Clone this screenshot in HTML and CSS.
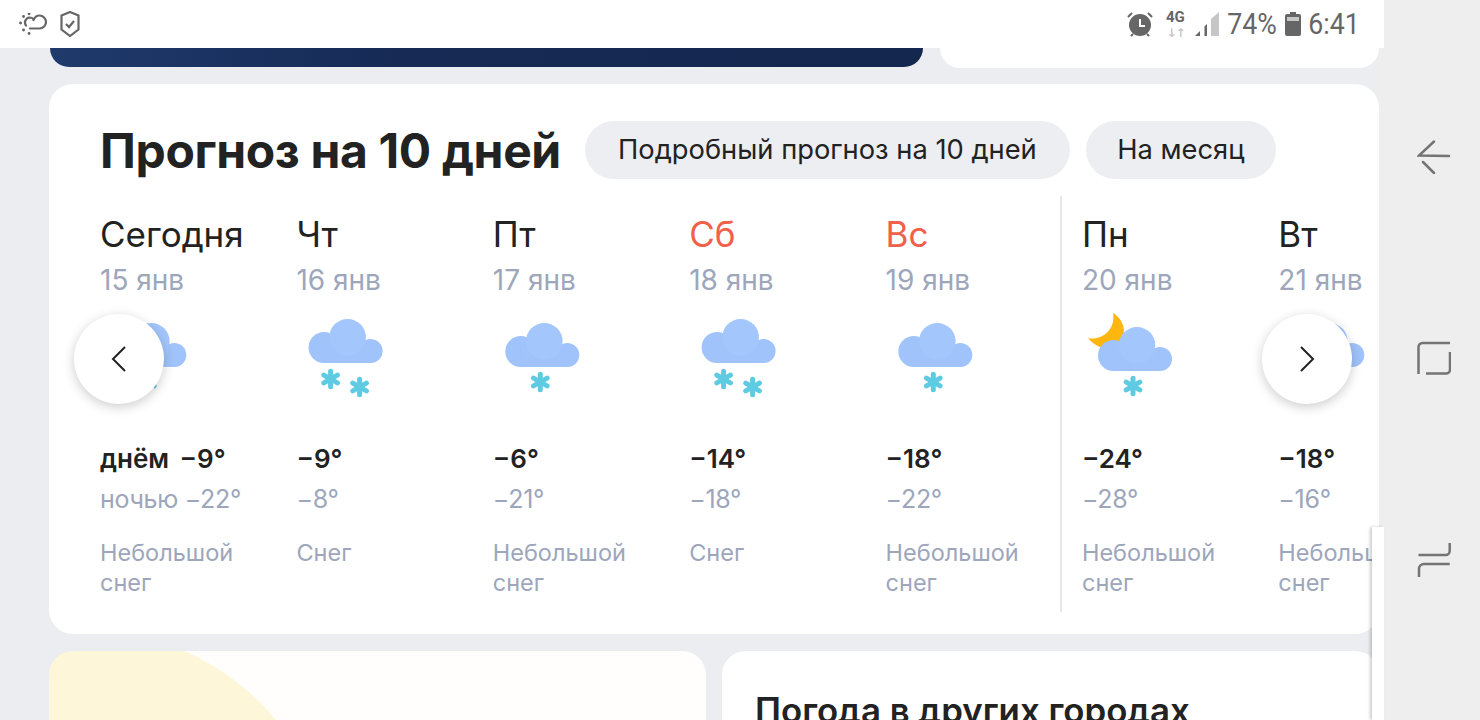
FILE: index.html
```html
<!DOCTYPE html>
<html lang="ru">
<head>
    <meta charset="UTF-8">
    <title>Прогноз на 10 дней</title>
    <link rel="stylesheet" href="styles.css">
</head>
<body>
    <svg class="defs" width="0" height="0">
        <defs>
            <g id="cloud">
                <circle cx="15.5" cy="28.5" r="15.5" fill="#9fc3fa"/>
                <circle cx="62" cy="32" r="12" fill="#9fc3fa"/>
                <rect x="15" y="22" width="47" height="22" fill="#9fc3fa"/>
                <circle cx="39" cy="18.3" r="18.3" fill="#a3c6fc"/>
            </g>
            <g id="flake" stroke="#5fcbe3" stroke-width="5" stroke-linecap="round">
                <line x1="0" y1="-7.8" x2="0" y2="7.8"/>
                <line x1="-6.8" y1="-3.9" x2="6.8" y2="3.9"/>
                <line x1="-6.8" y1="3.9" x2="6.8" y2="-3.9"/>
            </g>
            <g id="snow-light">
                <use href="#cloud" x="12.3" y="8"/>
                <use href="#flake" x="47.3" y="67"/>
            </g>
            <g id="snow-heavy">
                <use href="#cloud" x="12.6" y="4"/>
                <use href="#flake" x="34.6" y="64"/>
                <use href="#flake" x="63.6" y="72"/>
            </g>
        </defs>
    </svg>

    <div class="app">
        <div class="screen">
            <div class="status">
                <div class="status-left">
                    <svg width="28" height="22" viewBox="0 0 28 22" fill="none" stroke="#666" stroke-width="2.200" stroke-linecap="round">
                        <path d="M11 15.500h9.500a6.500 6.500 0 0 0 0-13c-3 0-5 2-6 4.500"/>
                        <path d="M7 12.500a5 5 0 0 1 3.500-8c1.500 0 3 .5 4 1.500"/>
                        <path d="M1.500 10h.1M4.500 3.500h.1M10 .8h.1M4.500 17h.1M10 20.500h.1" stroke-width="2.800"/>
                    </svg>
                    <svg width="20" height="26" viewBox="0 0 20 26" fill="none" stroke="#666" stroke-width="2.200">
                        <path d="M10 1l8.500 3.500v14L10 25l-8.500-6.500v-14z"/>
                        <path d="M6 13l3 3 5-6"/>
                    </svg>
                </div>
                <div class="status-right">
                    <svg class="alarm" width="26" height="25" viewBox="0 0 26 25">
                        <circle cx="13" cy="13" r="11" fill="#666"/>
                        <path d="M13 7v7h5" fill="none" stroke="#fff" stroke-width="2"/>
                        <path d="M1 5l4-4M25 5l-4-4M4 24l2-2M22 24l-2-2" stroke="#666" stroke-width="2"/>
                    </svg>
                    <div class="net">
                        <span class="net-label">4G</span>
                        <span class="net-arrows">↓↑</span>
                    </div>
                    <svg class="signal" width="24" height="24" viewBox="0 0 24 24">
                        <path d="M24 0v24H16V7z" fill="#c6c6c6"/>
                        <path d="M12 12v12H9.500V14.500z" fill="#666"/>
                        <path d="M5 19v5H0z" fill="#666"/>
                    </svg>
                    <span class="status-text">74%</span>
                    <svg class="battery" width="16" height="24" viewBox="0 0 16 24">
                        <path d="M5 0h6v2h3a2 2 0 0 1 2 2v18a2 2 0 0 1-2 2H2a2 2 0 0 1-2-2V4a2 2 0 0 1 2-2h3z" fill="#666"/>
                        <rect x="2" y="5" width="12" height="4" fill="#c6c6c6"/>
                    </svg>
                    <span class="status-text time">6:41</span>
                </div>
            </div>

            <div class="top-row">
                <div class="promo"></div>
                <div class="top-card"></div>
            </div>

            <section class="forecast">
                <div class="forecast-head">
                    <h1>Прогноз на 10 дней</h1>
                    <a class="pill pill-wide">Подробный прогноз на 10 дней</a>
                    <a class="pill">На месяц</a>
                </div>

                <div class="days">
                    <div class="day">
                        <div class="day-name">Сегодня</div>
                        <div class="day-date">15 янв</div>
                        <svg class="day-icon" viewBox="0 -5 100 95"><use href="#snow-light"/></svg>
                        <div class="temp-day"><span class="temp-label">днём</span> −9°</div>
                        <div class="temp-night">ночью −22°</div>
                        <div class="day-desc">Небольшой снег</div>
                    </div>
                    <div class="day">
                        <div class="day-name">Чт</div>
                        <div class="day-date">16 янв</div>
                        <svg class="day-icon" viewBox="0 -5 100 95"><use href="#snow-heavy"/></svg>
                        <div class="temp-day">−9°</div>
                        <div class="temp-night">−8°</div>
                        <div class="day-desc">Снег</div>
                    </div>
                    <div class="day">
                        <div class="day-name">Пт</div>
                        <div class="day-date">17 янв</div>
                        <svg class="day-icon" viewBox="0 -5 100 95"><use href="#snow-light"/></svg>
                        <div class="temp-day">−6°</div>
                        <div class="temp-night">−21°</div>
                        <div class="day-desc">Небольшой снег</div>
                    </div>
                    <div class="day weekend">
                        <div class="day-name">Сб</div>
                        <div class="day-date">18 янв</div>
                        <svg class="day-icon" viewBox="0 -5 100 95"><use href="#snow-heavy"/></svg>
                        <div class="temp-day">−14°</div>
                        <div class="temp-night">−18°</div>
                        <div class="day-desc">Снег</div>
                    </div>
                    <div class="day weekend">
                        <div class="day-name">Вс</div>
                        <div class="day-date">19 янв</div>
                        <svg class="day-icon" viewBox="0 -5 100 95"><use href="#snow-light"/></svg>
                        <div class="temp-day">−18°</div>
                        <div class="temp-night">−22°</div>
                        <div class="day-desc">Небольшой снег</div>
                    </div>
                    <div class="day week-start">
                        <div class="day-name">Пн</div>
                        <div class="day-date">20 янв</div>
                        <svg class="day-icon" viewBox="0 -5 100 95">
                            <path d="M31 -2C44 6 46 22 34 31C26 36 14 33 6 23C18 26 34 16 31 -2z" fill="#ffb70f"/>
                            <use href="#cloud" x="16" y="12"/>
                            <use href="#flake" x="51" y="71"/>
                        </svg>
                        <div class="temp-day">−24°</div>
                        <div class="temp-night">−28°</div>
                        <div class="day-desc">Небольшой снег</div>
                    </div>
                    <div class="day">
                        <div class="day-name">Вт</div>
                        <div class="day-date">21 янв</div>
                        <svg class="day-icon" viewBox="0 -5 100 95"><use href="#snow-light"/></svg>
                        <div class="temp-day">−18°</div>
                        <div class="temp-night">−16°</div>
                        <div class="day-desc">Небольшой снег</div>
                    </div>
                </div>

                <button class="arrow arrow-prev">
                    <svg width="16" height="26" viewBox="0 0 16 26" fill="none" stroke="#222" stroke-width="2"><path d="M14 1L2 13l12 12"/></svg>
                </button>
                <button class="arrow arrow-next">
                    <svg width="16" height="26" viewBox="0 0 16 26" fill="none" stroke="#222" stroke-width="2"><path d="M2 1l12 12L2 25"/></svg>
                </button>
            </section>

            <div class="bottom-row">
                <div class="bottom-card sunny"></div>
                <div class="bottom-card">
                    <h2>Погода в других городах</h2>
                </div>
            </div>

            <div class="scroll-strip"></div>
        </div>

        <nav class="softkeys">
            <svg width="34" height="34" viewBox="0 0 34 34" fill="none" stroke="#747474" stroke-width="2.500" stroke-linecap="round">
                <path d="M17 1.500L2 15.500l30 .5M6 22l11 11"/>
            </svg>
            <svg width="34" height="34" viewBox="0 0 34 34" fill="none" stroke="#747474" stroke-width="2.500">
                <path d="M1.500 33V6a4 4 0 0 1 4-4h27.500"/>
                <path d="M9 32.500h20a4 4 0 0 0 4-4V11"/>
            </svg>
            <svg width="34" height="36" viewBox="0 0 34 36" fill="none" stroke="#747474" stroke-width="2.500">
                <path d="M32.700 1v8a4 4 0 0 1-4 4H1.500"/>
                <path d="M32.700 22H7a5 5 0 0 0-5 5v8"/>
            </svg>
        </nav>
    </div>
</body>
</html>
```

FILE: styles.css
```css
html, body {
    margin: 0;
    height: 720px;
    overflow: hidden;
}
body {
    font-family: "Inter", "Noto Sans", sans-serif;
    color: #222;
    background: #eeeeef;
}
.defs {
    position: absolute;
}
.app {
    display: flex;
    width: 1480px;
    height: 720px;
}
.screen {
    position: relative;
    width: 1379px;
    height: 720px;
    flex-shrink: 0;
    background: #ecedf1;
    overflow: visible;
}

/* status bar */
.status {
    position: relative;
    z-index: 3;
    display: flex;
    justify-content: space-between;
    align-items: center;
    width: 1384px;
    height: 48px;
    box-sizing: border-box;
    padding: 0 24px 0 19px;
    background: #fff;
}
.status-left {
    display: flex;
    align-items: center;
    gap: 13px;
}
.status-right {
    display: flex;
    align-items: center;
}
.net {
    display: flex;
    flex-direction: column;
    align-items: center;
    width: 20px;
    margin-left: 12px;
    line-height: 12px;
}
.net-label {
    font: bold 15px "Roboto", sans-serif;
    color: #666;
}
.net-arrows {
    font: bold 12px "DejaVu Sans", sans-serif;
    letter-spacing: -1px;
    color: #c6c6c6;
}
.signal {
    margin-left: 10px;
}
/* the phone's status font is narrower than anything installed */
.status-text {
    margin-left: 2px;
    font: 400 30px/36px "Roboto", sans-serif;
    color: #666;
    transform: scaleX(0.89);
    transform-origin: right center;
}
.time {
    margin-left: 1px;
}
.battery {
    margin-left: 8px;
}

/* cards above the forecast */
.top-row {
    display: flex;
    gap: 17px;
    height: 20px;
    margin-left: 50px;
}
.promo {
    width: 873px;
    height: 19px;
    border-radius: 0 0 24px 24px;
    background: linear-gradient(90deg, #1f3a6c, #162a55 40%, #14274e);
}
.top-card {
    flex: 1;
    border-radius: 0 0 24px 24px;
    background: #fff;
}

/* forecast */
.forecast {
    position: relative;
    height: 550px;
    box-sizing: border-box;
    margin: 16px 0 0 49px;
    padding: 37px 0 0 51px;
    border-radius: 24px;
    background: #fff;
    overflow: hidden;
}
.forecast-head {
    display: flex;
    align-items: center;
    height: 58px;
}
h1 {
    margin: 0 24px 0 0;
    font-size: 48px;
    font-weight: 700;
    letter-spacing: -0.35px;
    white-space: nowrap;
}
.pill {
    display: flex;
    align-items: center;
    justify-content: center;
    width: 190px;
    height: 58px;
    box-sizing: border-box;
    padding-bottom: 2px;
    margin-right: 16px;
    border-radius: 29px;
    background: #eceef2;
    font-size: 27.3px;
}
.pill-wide {
    width: 485px;
}
.days {
    display: flex;
    margin-top: 35px;
}
.day {
    position: relative;
    flex: 0 0 196.4px;
}
.week-start::before {
    content: "";
    position: absolute;
    left: -22px;
    top: -18px;
    bottom: -14px;
    width: 2px;
    background: #e6e7eb;
}
.day-name {
    font-size: 35px;
    line-height: 41px;
}
.weekend .day-name {
    color: #f0604a;
}
.day-date {
    margin-top: 9px;
    font-size: 28px;
    line-height: 32px;
    color: #9da6bb;
}
.day-icon {
    display: block;
    width: 100px;
    height: 95px;
    margin-top: 14px;
}
.temp-day {
    margin-top: 36px;
    font-size: 26px;
    font-weight: 600;
    line-height: 36px;
}
.temp-label {
    margin-right: 4px;
}
.temp-night {
    margin-top: 4px;
    font-size: 25px;
    line-height: 36px;
    letter-spacing: -0.3px;
    color: #9da6bb;
    white-space: nowrap;
}
.day-desc {
    width: 150px;
    margin-top: 21px;
    font-size: 23.5px;
    line-height: 30px;
    color: #9da6bb;
}
.arrow {
    position: absolute;
    top: 230px;
    display: flex;
    align-items: center;
    justify-content: center;
    width: 90px;
    height: 90px;
    padding: 0;
    border: 0;
    border-radius: 50%;
    background: #fff;
    box-shadow: 0 3px 12px rgba(0, 0, 0, 0.2);
}
.arrow-prev {
    left: 25px;
}
.arrow-next {
    left: 1213px;
}

/* cards below */
.bottom-row {
    display: grid;
    grid-template-columns: 657px 657px;
    gap: 16px;
    height: 69px;
    margin: 17px 0 0 49px;
    overflow: hidden;
}
.bottom-card {
    height: 200px;
    border-radius: 24px;
    background: #fff;
    padding: 39px 33px 0;
    box-sizing: border-box;
}
.sunny {
    background: radial-gradient(circle 257px at 31px 234px, #fef6d9 99.500%, #fffefc 100%);
}
h2 {
    margin: 0;
    font-size: 34.8px;
    font-weight: 600;
    line-height: 40px;
    white-space: nowrap;
}
.scroll-strip {
    position: absolute;
    left: 1372px;
    top: 527px;
    z-index: 2;
    width: 12px;
    height: 193px;
    background: #fff;
    box-shadow: -2px 0 3px rgba(0, 0, 0, 0.2);
}

/* android soft keys */
.softkeys {
    display: flex;
    flex-direction: column;
    gap: 167px;
    box-sizing: border-box;
    flex: 1;
    padding: 140px 0 0 38px;
}
```
